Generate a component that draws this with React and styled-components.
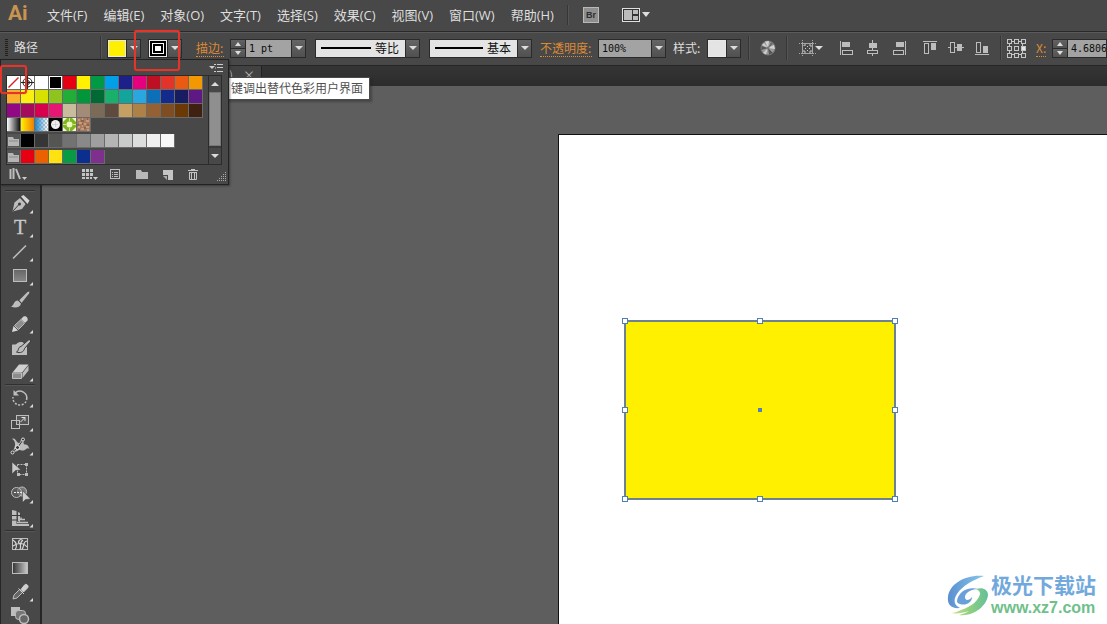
import React from 'react';
import styled, { createGlobalStyle } from 'styled-components';

const Global = createGlobalStyle`
  * { box-sizing: border-box; }
  html, body { margin: 0; height: 100%; }
  body { background: #5e5e5e; overflow: hidden; }
  button, input, select { font: inherit; color: inherit; margin: 0; padding: 0; border: 0; border-radius: 0; background: none; outline: none; }
  svg { display: block; }
`;

const Window = styled.div`
  position: relative;
  display: flex;
  flex-direction: column;
  height: 100vh;
  overflow: hidden;
  font: 12px/16px 'Noto Sans CJK SC', sans-serif;
  color: #dedede;
`;

/* ---------- menu bar ---------- */
const MenuBar = styled.header`
  display: flex;
  align-items: center;
  flex: none;
  height: 32px;
  padding: 0 0 1px 8px;
  background: #484848;
  border-bottom: 1px solid #2a2a2a;
  font: 13px/18px 'Open Sans', 'Noto Sans CJK SC', sans-serif;
`;
const Brand = styled.div`
  width: 31px;
  padding-bottom: 4px;
  font: bold 21px/20px Roboto, sans-serif;
  color: #c8944f;
`;
const Menus = styled.nav`
  display: flex;
`;
const MenuItem = styled.button`
  padding: 0 8px;
  white-space: nowrap;
`;
const Divider = styled.span`
  flex: none;
  width: 2px;
  height: ${(p) => p.$h || 20}px;
  margin-left: ${(p) => p.$ml || 0}px;
  border-left: 1px solid #363636;
  border-right: 1px solid #555;
`;
const Bridge = styled.button`
  width: 16px;
  height: 16px;
  margin-left: 14px;
  background: #8f8f8f;
  border: 1px solid #b9b9b9;
  font: bold 9px/13px 'Liberation Sans', sans-serif;
  color: #2e2e2e;
`;
const IconButton = styled.button`
  flex: none;
  margin-left: ${(p) => p.$ml || 0}px;
`;

/* ---------- control bar ---------- */
const ControlBar = styled.section`
  display: flex;
  align-items: center;
  flex: none;
  height: 34px;
  padding: 0 0 2px 5px;
  background: #484848;
  border-top: 1px solid #5a5a5a;
  border-bottom: 1px solid #262626;
  overflow: hidden;
`;
const Grip = styled.span`
  flex: none;
  width: 3px;
  height: 18px;
  background: repeating-linear-gradient(#1f1f1f 0 1px, #484848 1px 2px);
`;
const Title = styled.span`
  flex: none;
  width: 86px;
  margin-left: 6px;
  padding-bottom: 2px;
`;
const Label = styled.label`
  flex: none;
  width: ${(p) => p.$w}px;
  margin-left: ${(p) => p.$ml}px;
  white-space: nowrap;
`;
const LinkLabel = styled(Label)`
  color: #dc8a35;
  border-bottom: 1px dotted #dc8a35;
`;
const Combo = styled.div`
  display: flex;
  flex: ${(p) => (p.$grow ? '1 0 auto' : 'none')};
  height: 19px;
  margin-left: ${(p) => p.$ml}px;
  border: 1px solid #2a2a2a;
`;
const Field = styled.input`
  width: ${(p) => p.$w}px;
  flex: ${(p) => (p.$grow ? 1 : 'none')};
  padding-left: 3px;
  background: #a3a3a3;
  color: #0c0c0c;
  font: 10px/17px 'DejaVu Sans Mono', monospace;
`;
const DropButton = styled.button`
  display: flex;
  align-items: center;
  justify-content: center;
  flex: none;
  width: 14px;
  background: linear-gradient(#656565, #505050);
  border-left: 1px solid #2a2a2a;
`;
const Triangle = styled.i`
  border: 4px solid transparent;
  border-top-color: #dcdcdc;
  border-bottom: 0;
`;
const Spinner = styled.div`
  display: flex;
  flex-direction: column;
  width: 15px;
  border-right: 1px solid #2a2a2a;
`;
const SpinButton = styled.button`
  display: flex;
  align-items: center;
  justify-content: center;
  flex: 1;
  background: linear-gradient(#626262, #525252);
  & + & { border-top: 1px solid #2a2a2a; }
`;
const SpinArrow = styled.i`
  border: 3px solid transparent;
  ${(p) => (p.$up ? 'border-bottom: 4px solid #ddd; border-top: 0;' : 'border-top: 4px solid #ddd; border-bottom: 0;')}
`;
const SwatchChip = styled.button`
  display: flex;
  align-items: center;
  justify-content: center;
  width: 18px;
  background: ${(p) => p.$c};
  border: 1px solid #e8e8e8;
`;
const StrokeRing = styled.span`
  width: 12px;
  height: 11px;
  border: 1px solid #fff;
  background: #fff;
  box-shadow: inset 0 0 0 2px #000;
`;
const LineSelectBox = styled.div`
  position: relative;
  flex: none;
  width: ${(p) => p.$w}px;
  height: 19px;
  margin-left: 9px;
  border: 1px solid #2a2a2a;
  ${DropButton} { position: absolute; top: 0; right: 0; bottom: 0; pointer-events: none; }
`;
const LineSelect = styled.select`
  appearance: none;
  display: block;
  width: 100%;
  height: 17px;
  padding: 0 20px 0 5px;
  text-align-last: right;
  color: #111;
  background: linear-gradient(#000, #000) 5px 7px / calc(100% - 53px) 2px no-repeat #e4e4e4;
`;
const AlignGroup = styled.div`
  display: flex;
  flex: none;
  gap: 10px;
  margin-left: 15px;
`;

/* ---------- document tabs and work area ---------- */
const TabBar = styled.div`
  display: flex;
  flex: none;
  height: 20px;
  padding-left: 42px;
  background: linear-gradient(#353535, #2c2c2c);
`;
const Tab = styled.div`
  display: flex;
  justify-content: flex-end;
  gap: 10px;
  width: 220px;
  padding: 1px 6px 0 0;
  background: #424242;
  color: #b4b4b4;
  border-right: 1px solid #222;
`;
const Work = styled.main`
  display: flex;
  flex: 1;
  min-height: 0;
`;
const ToolBar = styled.aside`
  display: flex;
  flex-direction: column;
  flex: none;
  width: 42px;
  padding-top: 104px;
  background: #484848;
  border-left: 1px solid #262626;
  border-right: 2px solid #262626;
  overflow: hidden;
`;
const ToolRule = styled.hr`
  flex: none;
  width: 30px;
  height: 2px;
  margin: 0 0 0 4px;
  border: 0;
  border-top: 1px solid #303030;
  border-bottom: 1px solid #565656;
`;
const Tool = styled.button`
  flex: none;
  height: 24px;
  padding-left: 7px;
`;
const Canvas = styled.div`
  position: relative;
  flex: 1;
  background: #5e5e5e;
  overflow: hidden;
`;
const Artboard = styled.div`
  position: absolute;
  inset: 48px 0 0 516px;
  background: #fff;
  border: solid #111;
  border-width: 1px 0 0 1px;
`;
const Shape = styled.div`
  position: absolute;
  left: 65px;
  top: 185px;
  width: 272px;
  height: 180px;
  background: #fff000;
  border: 2px solid #6d8191;
`;
const SelectionFrame = styled.div`
  position: absolute;
  inset: -1px;
`;
const Handle = styled.i`
  position: absolute;
  left: ${(p) => p.$x}%;
  top: ${(p) => p.$y}%;
  width: 6px;
  height: 6px;
  margin: -3px;
  background: #fff;
  border: 1px solid #4f7fb5;
`;
const Center = styled(Handle)`
  width: 4px;
  height: 4px;
  margin: -2px;
  background: #5580b0;
`;
const Watermark = styled.div`
  position: absolute;
  right: 11px;
  bottom: 7px;
  display: flex;
  align-items: flex-end;
  gap: 2px;
`;
const MarkText = styled.div`
  font: bold 21px/30px 'Noto Sans CJK SC', sans-serif;
  color: #72a9dc;
`;
const MarkUrl = styled.div`
  font: bold 16px/18px 'Liberation Sans', sans-serif;
  color: #6fc08a;
`;

/* ---------- swatch panel ---------- */
const Panel = styled.section`
  position: absolute;
  left: 0;
  top: 59px;
  width: 229px;
  padding: 0 6px 0 5px;
  background: #484848;
  border: 1px solid #222;
  box-shadow: 1px 1px 2px #2229;
`;
const PanelHead = styled.div`
  display: flex;
  justify-content: flex-end;
  align-items: center;
  height: 15px;
  margin-right: -2px;
`;
const ListBox = styled.div`
  display: flex;
  justify-content: space-between;
  height: 90px;
  border: 1px solid #2c2c2c;
`;
const Rows = styled.div`
  display: flex;
  flex-direction: column;
  align-items: flex-start;
  gap: 2px;
`;
const SwatchGrid = styled.div`
  display: grid;
  grid-template-columns: repeat(${(p) => p.$n || 14}, 14px);
`;
const Swatch = styled.button`
  width: 14px;
  height: 14px;
  background: ${(p) => p.$c || '#555'};
  background-clip: padding-box;
  border: solid #6a6a6a;
  border-width: 0 1px 1px 0;
  ${(p) => p.$ring && 'box-shadow: inset 0 0 0 1px #fff;'}
`;
const Scroll = styled.div`
  display: flex;
  flex-direction: column;
  width: 13px;
  border-left: 1px solid #2c2c2c;
  background: #3a3a3a;
`;
const ScrollButton = styled.button`
  display: flex;
  align-items: center;
  justify-content: center;
  height: 16px;
  background: #484848;
`;
const Thumb = styled.div`
  flex: 1;
  margin-bottom: 2px;
  background: #8f8f8f;
  border: 1px solid #777;
`;
const UpTriangle = styled.i`
  border: 4px solid transparent;
  border-bottom-color: #dcdcdc;
  border-top: 0;
`;
const PanelFoot = styled.div`
  display: flex;
  align-items: center;
  height: 19px;
  padding-bottom: 2px;
`;
const Tooltip = styled.div`
  position: absolute;
  left: 225px;
  top: 77px;
  padding: 1px 6px 2px 5px;
  line-height: 18px;
  background: #fff;
  border: 1px solid #4a4a4a;
  box-shadow: 2px 2px 2px #2226;
  color: #505050;
`;
const RedMark = styled.div`
  position: absolute;
  left: ${(p) => p.$x}px;
  top: ${(p) => p.$y}px;
  width: ${(p) => p.$w}px;
  height: ${(p) => p.$h}px;
  border: 2px solid #e5352a;
  border-radius: 3px;
  box-shadow: 0 0 1px #e5352a;
`;

const L = '#bdbdbd';
const D = '#3a3a3a';

const toolGroups = [
  [
    ['钢笔', 1, <><path d="M4.500 19.500 6.500 10.500 12 6 18 11.500 14 17Z" fill={L} /><path d="M13 4.500 15.500 3 21.500 8.500 19.500 12Z" fill="#d5d5d5" /><path d="M5 19 11 12.500M12.500 5.500 18.500 12.500" stroke={D} /><circle cx="11.500" cy="12" r="1.500" fill={D} /></>],
    ['文字', 1, <text x="6" y="18" fontSize="20" fontFamily="Liberation Serif, serif" fill="#c8c8c8" stroke="#c8c8c8" strokeWidth=".3">T</text>],
    ['直线段', 1, <path d="M5 18.500 18 5.500" stroke={L} strokeWidth="1.500" />],
    ['矩形', 1, <rect x="5.500" y="5.500" width="13" height="12" fill="url(#rectFill)" stroke={L} />],
    ['画笔', 0, <><path d="M11 12.500 19.500 4 21.500 3.500 21 5.500 13.500 15Z" fill={L} /><path d="M3 18.500C6 18 5.500 12.500 10 12.500L13 15.500C12.500 19.500 7 20.500 3 18.500Z" fill={L} /><path d="M10.500 12 13.500 15.500" stroke={D} /></>],
    ['铅笔', 1, <><path d="M4 20 5.500 14 10 18.500Z" fill="#d8d8d8" /><path d="M6.500 13.500 13 7.500 16.500 11.500 10.500 17.500Z" fill="#8d8d8d" stroke={L} /><path d="M13 7 15.500 4.500C18 3.500 20.500 6 19.500 8.500L17 11Z" fill="#cfcfcf" /></>],
    ['斑点画笔', 0, <><path d="M4 9C4 8 7 9 8.500 8 10 6 14 5.500 15 6.500L19 11V19H4Z" fill={L} /><path d="M8.500 16C11 15.500 9.500 11 13 10.500L21 3.500 23 5 16.500 12.500C16 16 12 17.500 8.500 16Z" fill={L} stroke={D} /></>],
    ['橡皮擦', 1, <><path d="M4.500 12.500 11 4.500H20.500L14 12.500Z" fill="#d0d0d0" /><path d="M4.500 13H13.500V18.500H4.500Z" fill="#8c8c8c" stroke={L} /><path d="M14.500 13 20.500 5.500V10.500L14.500 18Z" fill={L} /></>],
  ],
  [
    ['旋转', 1, <g fill="none" stroke={L} strokeWidth="1.500"><path d="M7 7A7 7 0 0 1 18.500 14" /><path d="M18 15.500A7 7 0 0 1 5 11" strokeDasharray="2 1.500" /><path d="M5.500 4V9.500H11Z" fill={L} stroke="none" /></g>],
    ['比例缩放', 1, <g fill="none" stroke={L}><rect x="8.500" y="5.500" width="12" height="9" fill="#555" /><rect x="3.500" y="10.500" width="8" height="8" /><path d="M12.500 12 17 7.500M13.500 7.500H17V11" stroke="#e0e0e0" /></g>],
    ['宽度', 1, <><path d="M4 5C8 3 8 9 11 9 13 9 12 5 14.500 5 17 6 14 10 17 10.500 19 10.500 20 11 21.500 15 19 13 18 16 15.500 16.500 12 17 12 15 9.500 17 7 18.500 4.500 18 6 14.500 8 11 7 6 4 5Z" fill={L} /><path d="M4 18.500 9.500 13.500 15 6" stroke={D} fill="none" /><circle cx="4.500" cy="18.500" r="1.500" fill={D} stroke="#ddd" /><circle cx="9.500" cy="13.500" r="2" fill={D} stroke="#eee" /><circle cx="15" cy="5.500" r="1.500" fill={D} stroke="#ddd" /></>],
    ['自由变换', 0, <><rect x="9.500" y="6.500" width="9" height="10" fill="none" stroke={L} strokeDasharray="2 1" /><g fill={L}><rect x="17" y="5" width="3" height="3" /><rect x="17" y="15" width="3" height="3" /><rect x="9" y="15" width="3" height="3" /></g><path d="M4 4V16L7.500 12.500 13 12Z" fill="#c9c9c9" stroke={D} strokeWidth=".5" /></>],
    ['形状生成器', 1, <><g fill="#777" stroke={L}><circle cx="14" cy="9.500" r="4.500" /><circle cx="8.500" cy="10.500" r="5" fill="#6669" /></g><path d="M6 10.500H16" stroke="#eee" strokeDasharray="2 1" /><path d="M14.500 8.500V20.500L17.500 17.500 22.500 17Z" fill="#ccc" stroke={D} strokeWidth=".5" /></>],
    ['透视网格', 1, <g fill="none"><path d="M4 4 8.500 5V19H4ZM10 6 12 7V16L10 15Z" fill={L} /><path d="M4 9.500H13M4 14H9" stroke={D} /><path d="M9 16.500H20M12 13.500H17M13 11.500V13" stroke={L} strokeWidth="1.500" /><path d="M4 19H21" stroke={L} strokeWidth="2" /></g>],
  ],
  [
    ['网格', 0, <><rect x="4.500" y="6.500" width="15" height="11" fill="none" stroke={L} /><path d="M7 18C10 14 8 10 5 8M5 14C9 11 15 10 19 15M12 12C9 10 11 8 14 7M14 17C17 14 14 10 19 9M12 17C14 14 10 12 15 8" stroke="#d5d5d5" fill="none" strokeWidth="1.200" /></>],
    ['渐变', 0, <rect x="4.500" y="6.500" width="15" height="11" fill="url(#gradTool)" stroke={L} />],
    ['吸管', 1, <><path d="M12 9 6 15 5 19 9 18 15 12" fill="#666" stroke={L} /><path d="M10.500 8.500 16 14M13 9.500 16.500 5C18 3 21.500 6 19.500 8L15.500 12Z" fill="#d0d0d0" stroke="#d0d0d0" /></>],
    ['混合', 0, <><rect x="3" y="3" width="9" height="9" fill={L} /><rect x="7.500" y="6.500" width="10" height="9" rx="3" fill="#777" stroke={L} /><circle cx="16" cy="15" r="4.500" fill="#666" stroke={L} strokeWidth="1.500" /></>],
  ],
];

const ToolIcon = ({ more, children }) => (
  <svg width="28" height="24" viewBox="0 0 28 24" fill="none">
    {children}
    {more ? <path d="M25 18V21.500H21.500Z" fill="#dcdcdc" /> : null}
  </svg>
);

const alignIcons = {
  左对齐: <><path d="M1.500 1V15" stroke={L} /><rect x="3" y="2" width="8" height="5" fill={L} /><rect x="3.500" y="10.500" width="10" height="4" fill="#444" stroke={L} /></>,
  水平居中: <><path d="M7.500 0V16" stroke={L} /><rect x="4" y="3" width="8" height="5" fill={L} /><rect x="2.500" y="10.500" width="10" height="3" fill="#444" stroke={L} /></>,
  右对齐: <><path d="M14.500 1V15" stroke={L} /><rect x="5" y="2" width="8" height="5" fill={L} /><rect x="2.500" y="10.500" width="10" height="4" fill="#444" stroke={L} /></>,
};
const alignVIcons = {
  顶对齐: <><path d="M1 1.500H15" stroke={L} /><rect x="2.500" y="3.500" width="4" height="10" fill="#444" stroke={L} /><rect x="9" y="3" width="5" height="7" fill={L} /></>,
  垂直居中: <><path d="M0 7.500H16" stroke={L} /><rect x="2.500" y="2.500" width="4" height="10" fill="#444" stroke={L} /><rect x="9" y="4" width="5" height="7" fill={L} /></>,
  底对齐: <><path d="M1 14.500H15" stroke={L} /><rect x="2.500" y="2.500" width="4" height="10" fill="#444" stroke={L} /><rect x="9" y="6" width="5" height="7" fill={L} /></>,
};
const Icons = ({ set }) => (
  <AlignGroup>
    {Object.entries(set).map(([name, art]) => (
      <IconButton key={name} aria-label={name}>
        <svg width="16" height="16" fill="none">{art}</svg>
      </IconButton>
    ))}
  </AlignGroup>
);

const palette = `#fff #fff #fff #000 #e60012 #fff100 #009944 #00a0e9 #1d2088 #e4007f #be0f25 #e3342b #eb5a12 #f39800
#fbb02d #fcee10 #d8e000 #8fc320 #22ac38 #009639 #006934 #19b06c #13a59b #2ba7e0 #0d6fb8 #132b8a #181c60 #5f1985
#920783 #a40b5d #d7004f #e61673 #c9bc9c #a48b78 #7a6a56 #5f4a3e #c69f63 #ae8247 #946134 #7e4e22 #6a3906 #402010`.split(/\s+/);
const grays = '#000 #363636 #555553 #727272 #898989 #9f9f9f #b5b5b6 #c9caca #dcdddd #efefef #f8f8f8'.split(' ');
const brights = '#e60012 #eb6100 #ffe212 #099b43 #0a2f8f #7d308d'.split(' ');

const Folder = () => (
  <svg width="14" height="14"><path d="M1 3H6L7 5H12V12H1Z" fill="#b5b5b5" /><path d="M2 7H11" stroke="#8a8a8a" /></svg>
);
const Special = ({ kind }) => (
  <svg width="13" height="13">
    {kind === 'none' && <path d="M1.500 11.500 11.500 1.500" stroke="#d8222a" strokeWidth="1.500" />}
    {kind === 'reg' && <g fill="none" stroke="#222"><circle cx="6.500" cy="6.500" r="4.500" /><circle cx="6.500" cy="6.500" r="2" /><path d="M6.500 0V13M0 6.500H13" /></g>}
    {kind === 'dot' && <><rect width="13" height="13" fill="#000" /><circle cx="6.500" cy="6.500" r="4.500" fill="#eee" /><path d="M6.500 3.500V9.500M3.500 6.500H9.500" stroke="#bbb" strokeDasharray="1 1" /></>}
    {kind === 'leaf' && <><rect width="13" height="13" fill="#7fb61e" /><circle cx="6.500" cy="6.500" r="3" fill="#eef7c4" /><path d="M0 0H4L0 4ZM13 13H9L13 9ZM13 0V4L9 0ZM0 13V9L4 13Z" fill="#f2f8d2" /><path d="M6.500 0V3M6.500 10V13M0 6.500H3M10 6.500H13" stroke="#cfe38a" /></>}
    {kind === 'grain' && <><rect width="13" height="13" fill="#a87b5e" /><path d="M1 2H3M5 1H6M9 3H12M2 5H5M7 6H9M1 9H3M5 8H6M9 9H12M4 11H7M10 12H12" stroke="#dbbda3" /><path d="M4 3H7M10 1H11M0 7H2M5 6H6M10 7H12M7 10H9M1 12H3" stroke="#744c33" /></>}
  </svg>
);
const specials = [
  ['渐变', 'linear-gradient(90deg, #fff, #111)', null],
  ['橙色渐变', 'linear-gradient(90deg, #fff100, #ef7d00)', null],
  ['蓝色渐变', 'linear-gradient(90deg, #1c86c9, #1c86c900), repeating-conic-gradient(#ccc 0 25%, #fff 0 50%) 0 0 / 4px 4px', null],
  ['圆点', '#000', 'dot'],
  ['叶子', '#8cc220', 'leaf'],
  ['颗粒', '#a87b5e', 'grain'],
];

const Drop = ({ name }) => <DropButton aria-label={name}><Triangle /></DropButton>;
const Spin = () => (
  <Spinner>
    <SpinButton aria-label="增加"><SpinArrow $up /></SpinButton>
    <SpinButton aria-label="减少"><SpinArrow /></SpinButton>
  </Spinner>
);

const menus = ['文件(F)', '编辑(E)', '对象(O)', '文字(T)', '选择(S)', '效果(C)', '视图(V)', '窗口(W)', '帮助(H)'];
const handles = [[0, 0], [50, 0], [100, 0], [0, 50], [100, 50], [0, 100], [50, 100], [100, 100]];
const refPoints = [0, 1, 2].flatMap((r) => [0, 1, 2].map((c) => [c, r]));

export default function App() {
  return (
    <Window>
      <Global />
      <MenuBar>
        <Brand>Ai</Brand>
        <Menus>{menus.map((m) => <MenuItem key={m}>{m}</MenuItem>)}</Menus>
        <Divider $ml={5} />
        <Bridge>Br</Bridge>
        <IconButton $ml={23} aria-label="排列文档">
          <svg width="28" height="16" fill="none">
            <rect x=".5" y="1.500" width="17" height="13" stroke="#e0e0e0" fill="#333" />
            <path d="M2 3H10V13H2ZM11 3H16V7H11ZM11 9H16V13H11Z" fill="#bbb" />
            <path d="M20 5H28L24 10Z" fill="#ddd" />
          </svg>
        </IconButton>
      </MenuBar>

      <ControlBar>
        <Grip />
        <Title>路径</Title>
        <Divider $h={24} />
        <Combo $ml={5}><SwatchChip $c="#fff000" aria-label="填色" /><Drop name="填色选项" /></Combo>
        <Combo $ml={7}><SwatchChip $c="#000" aria-label="描边颜色"><StrokeRing /></SwatchChip><Drop name="描边选项" /></Combo>
        <LinkLabel htmlFor="stroke" $w={28} $ml={14}>描边:</LinkLabel>
        <Combo $ml={6}><Spin /><Field id="stroke" $w={45} defaultValue="1 pt" /><Drop name="描边粗细" /></Combo>
        <LineSelectBox $w={105}>
          <LineSelect aria-label="变量宽度配置文件"><option>等比</option></LineSelect><Drop name="配置文件" />
        </LineSelectBox>
        <LineSelectBox $w={103}>
          <LineSelect aria-label="画笔定义"><option>基本</option></LineSelect><Drop name="画笔" />
        </LineSelectBox>
        <LinkLabel htmlFor="opacity" $w={52} $ml={8}>不透明度:</LinkLabel>
        <Combo $ml={6}><Field id="opacity" $w={52} defaultValue="100%" /><Drop name="不透明度选项" /></Combo>
        <Label htmlFor="style" $w={28} $ml={7}>样式:</Label>
        <Combo $ml={6}><SwatchChip id="style" $c="#e4e4e4" aria-label="图形样式" /><Drop name="样式选项" /></Combo>
        <Divider $ml={7} $h={24} />
        <IconButton $ml={10} aria-label="重新着色图稿">
          <svg width="16" height="16">
            <circle cx="8" cy="8" r="7" fill="#9a9a9a" stroke="#777" />
            <path d="M8 8 5 1.500 9 1ZM8 8 14 5 15 9Z" fill="#d2d2d2" />
            <path d="M8 8 1.500 6 1.500 10ZM8 8 13 13 9 14.500Z" fill="#555" />
            <path d="M8 8 3 13 6 14.500ZM8 8 2 5 4 3Z" fill="#cdcdcd" />
            <path d="M8 8 11 2 13 4Z" fill="#6a6a6a" />
            <circle cx="8" cy="8" r="1.500" fill="#777" />
          </svg>
        </IconButton>
        <Divider $ml={10} $h={24} />
        <IconButton $ml={10} aria-label="对齐选项">
          <svg width="26" height="18" fill="none">
            <path d="M4.500 1V4M4.500 14V17M14.500 1V4M14.500 14V17M1 4.500H4M15 4.500H18M1 14.500H4M15 14.500H18" stroke="#a5a5a5" strokeDasharray="1 1" />
            <rect x="4.500" y="4.500" width="10" height="10" stroke="#a5a5a5" />
            <path d="M6 7V6H8M11 6H13V8M13 11V13H11M8 13H6V11M9.500 8V7M9.500 12V11M7 9.500H8M11 9.500H12" stroke="#c9c9c9" />
            <path d="M17 7H25L21 11Z" fill="#ddd" />
          </svg>
        </IconButton>
        <Icons set={alignIcons} />
        <Icons set={alignVIcons} />
        <Divider $ml={10} $h={24} />
        <IconButton $ml={4} aria-label="参考点">
          <svg width="20" height="20" fill="none" stroke="#c4c4c4">
            <path d="M3 3.500H17M3 16.500H17M3.500 3V17M16.500 3V17" />
            {refPoints.map(([c, r]) => (
              <rect key={`${c}${r}`} x={1.5 + c * 7} y={1.5 + r * 7} width="4" height="4" fill={c === 2 && r === 1 ? '#e6e6e6' : '#484848'} />
            ))}
          </svg>
        </IconButton>
        <LinkLabel htmlFor="x" $w={10} $ml={10}>X:</LinkLabel>
        <Combo $ml={6} $grow><Spin /><Field id="x" $w={38} $grow defaultValue="4.6806" /></Combo>
      </ControlBar>

      <TabBar>
        <Tab><span>览)</span><span>×</span></Tab>
      </TabBar>

      <Work>
        <ToolBar>
          <svg width="0" height="0" aria-hidden="true">
            <linearGradient id="rectFill" x2="0" y2="1"><stop stopColor="#666" /><stop offset="1" stopColor="#888" /></linearGradient>
            <linearGradient id="gradTool"><stop stopColor="#333" /><stop offset="1" stopColor="#ccc" /></linearGradient>
          </svg>
          {toolGroups.map((group, i) => (
            <React.Fragment key={i}>
              <ToolRule />
              {group.map(([name, more, art]) => (
                <Tool key={name} aria-label={name}><ToolIcon more={more}>{art}</ToolIcon></Tool>
              ))}
            </React.Fragment>
          ))}
        </ToolBar>
        <Canvas>
          <Artboard>
            <Shape>
              <SelectionFrame>
                {handles.map(([x, y]) => <Handle key={`${x}-${y}`} $x={x} $y={y} />)}
                <Center $x={50} $y={50} />
              </SelectionFrame>
            </Shape>
          </Artboard>
          <Watermark>
            <svg width="42" height="42" viewBox="0 0 42 42" fill="none">
              <defs>
                <linearGradient id="swooshBlue" x2="1"><stop stopColor="#5b8fd0" /><stop offset="1" stopColor="#86c6ec" /></linearGradient>
                <linearGradient id="swooshGreen" x2="1" y2="0"><stop stopColor="#d3e08a" /><stop offset=".5" stopColor="#8fd080" /><stop offset="1" stopColor="#63bf9a" /></linearGradient>
              </defs>
              <path d="M37 1C19 -1 2 9 1 22C0 30 5 34 13 33C7 30 6 25 10 19C15 11 26 5 37 1Z" fill="url(#swooshBlue)" />
              <path d="M10 26C11 17 21 11 31 14C24 14 18 18 18 22C18 26 22 26 25 22C25 28 18 31 13 29C11 28 10 28 10 26Z" fill="#6b9fda" />
              <path d="M4 38C8 38 11 36 14 35C24 32 32 25 33 19C33 17 32 15 29 14C35 12 41 14 41 20C40 31 26 42 12 40C17 39 20 37 22 36C16 38 9 39 4 38Z" fill="url(#swooshGreen)" />
            </svg>
            <div>
              <MarkText>极光下载站</MarkText>
              <MarkUrl>www.xz7.com</MarkUrl>
            </div>
          </Watermark>
        </Canvas>
      </Work>

      <Tooltip role="tooltip">键调出替代色彩用户界面</Tooltip>

      <Panel aria-label="色板">
        <PanelHead>
          <IconButton aria-label="面板菜单">
            <svg width="15" height="10"><path d="M0 3H6L3 6Z" fill="#ccc" /><path d="M5 1.500H7M5 8.500H7M6 5H7M8 1.500H14M8 4.500H14M8 8.500H14" stroke="#ccc" /></svg>
          </IconButton>
        </PanelHead>
        <ListBox>
          <Rows>
            <div>
              <SwatchGrid>
                {palette.map((c, i) => (
                  <Swatch key={i} $c={c} $ring={i === 3} aria-label={`色板 ${c}`}>
                    {i < 2 && <Special kind={i ? 'reg' : 'none'} />}
                  </Swatch>
                ))}
              </SwatchGrid>
              <SwatchGrid $n={6}>
                {specials.map(([n, c, k]) => <Swatch key={n} $c={c} aria-label={n}>{k && <Special kind={k} />}</Swatch>)}
              </SwatchGrid>
            </div>
            <SwatchGrid $n={12}>
              <Swatch aria-label="灰度"><Folder /></Swatch>
              {grays.map((c) => <Swatch key={c} $c={c} aria-label={`灰度 ${c}`} />)}
            </SwatchGrid>
            <SwatchGrid $n={7}>
              <Swatch aria-label="明亮"><Folder /></Swatch>
              {brights.map((c) => <Swatch key={c} $c={c} aria-label={`明亮 ${c}`} />)}
            </SwatchGrid>
          </Rows>
          <Scroll>
            <ScrollButton aria-label="向上"><UpTriangle /></ScrollButton>
            <Thumb />
            <ScrollButton aria-label="向下"><Triangle /></ScrollButton>
          </Scroll>
        </ListBox>
        <PanelFoot>
          <IconButton $ml={3} aria-label="色板库">
            <svg width="20" height="14" fill="none"><path d="M1.500 2V12M4.500 1V12M7 2 11 12" stroke={L} strokeWidth="2" /><path d="M13 10H18L15.500 13Z" fill="#ccc" /></svg>
          </IconButton>
          <IconButton $ml={52} aria-label="显示色板类型">
            <svg width="18" height="14"><path d="M1 2H4V5H1ZM5 2H8V5H5ZM9 2H12V5H9ZM1 6H4V9H1ZM5 6H8V9H5ZM9 6H12V9H9ZM1 10H4V12H1ZM5 10H8V12H5ZM9 10H11V12H9Z" fill="#c4c4c4" /><path d="M12 10H17L14.500 13Z" fill="#ccc" /></svg>
          </IconButton>
          <IconButton $ml={10} aria-label="色板选项">
            <svg width="12" height="14" fill="none" stroke={L}><rect x="1.500" y="2.500" width="9" height="9" /><path d="M3 5.500H4M5 5.500H9M3 7.500H4M5 7.500H9M3 9.500H4M5 9.500H9" /></svg>
          </IconButton>
          <IconButton $ml={15} aria-label="新建颜色组">
            <svg width="13" height="14"><path d="M0 3H5L6 5H12V12H0Z" fill="#b9b9b9" /></svg>
          </IconButton>
          <IconButton $ml={13} aria-label="新建色板">
            <svg width="12" height="14"><path d="M1 3H11V13H6V8H1Z" fill="#c4c4c4" /><path d="M1 9H5V13Z" fill="#aaa" /></svg>
          </IconButton>
          <IconButton $ml={13} aria-label="删除色板">
            <svg width="12" height="14" fill="none" stroke="#c4c4c4"><path d="M1 3.500H11M4 2.500H8M2.500 5V12.500H9.500V5M4.500 5V12M7.500 5V12M2 5.500H10" /></svg>
          </IconButton>
          <IconButton $ml={16} aria-label="调整大小">
            <svg width="12" height="14"><path d="M10 5.500H11M8 7.500H11M6 9.500H11M4 11.500H11M2 13.500H11" stroke="#aaa" strokeDasharray="1 1" /></svg>
          </IconButton>
        </PanelFoot>
      </Panel>

      <RedMark $x={134} $y={30} $w={46} $h={41} />
      <RedMark $x={0} $y={65} $w={27} $h={29} />
    </Window>
  );
}
